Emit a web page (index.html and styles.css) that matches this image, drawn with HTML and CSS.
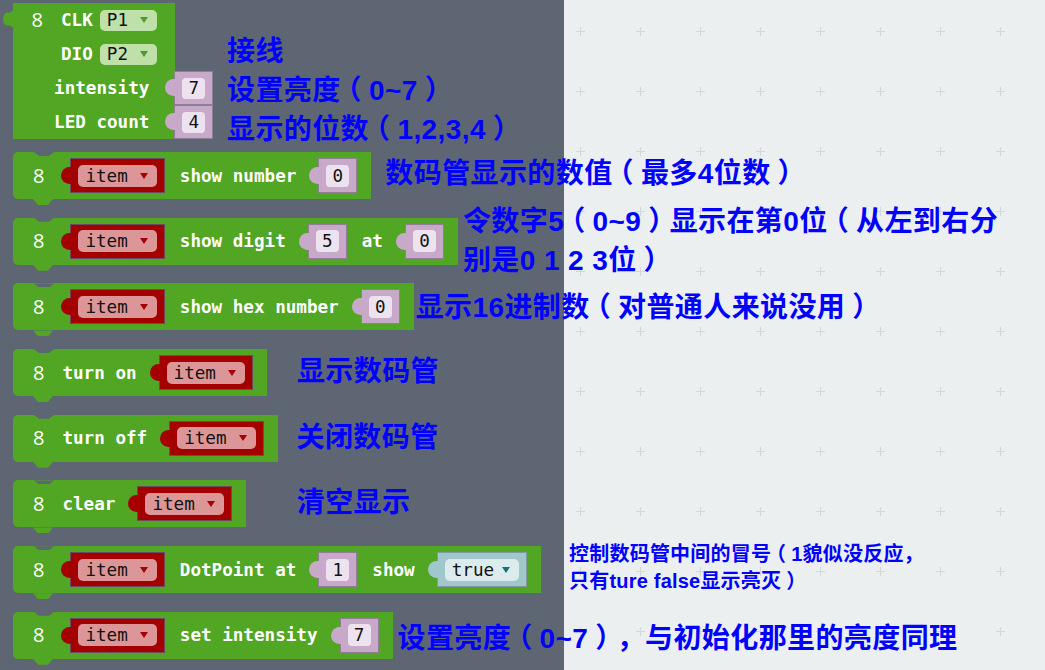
FILE: index.html
```html
<!DOCTYPE html>
<html lang="zh-CN">
<head>
<meta charset="utf-8">
<title>TM1637 blocks</title>
<link rel="stylesheet" href="styles.css">
</head>
<body>
<div class="ws">

  <div class="row row-init">
    <div class="b1">
      <svg class="otab" viewBox="0 0 10 18"><path d="M10 0 C9 2 7 2.5 5 2.5 C2 2.5 0 5 0 9 C0 13 2 15.5 5 15.5 C7 15.5 9 16 10 18 Z"/></svg>
      <div class="b1-line b1-first"><span class="num">8</span><span class="lbl">CLK</span><span class="dd dd-green">P1<i class="arr"></i></span></div>
      <div class="b1-line"><span class="lbl">DIO</span><span class="dd dd-green">P2<i class="arr"></i></span></div>
      <div class="b1-line b1-val"><span class="lbl">intensity</span><span class="slot s-purple s-tall"><span class="fld">7</span></span></div>
      <div class="b1-line b1-val"><span class="lbl">LED count</span><span class="slot s-purple s-tall"><span class="fld">4</span></span></div>
    </div>
    <div class="note note-init">接线<br>设置亮度<span class="pn">（</span>0~7<span class="pn">）</span><br>显示的位数<span class="pn">（</span>1,2,3,4<span class="pn">）</span></div>
  </div>

  <div class="row">
    <div class="blk"><span class="num">8</span><span class="slot s-red"><span class="dd dd-red">item<i class="arr"></i></span></span><span class="lbl">show number</span><span class="slot s-purple"><span class="fld">0</span></span></div>
    <div class="note n2">数码管显示的数值<span class="pn">（</span>最多4位数<span class="pn">）</span></div>
  </div>

  <div class="row">
    <div class="blk"><span class="num">8</span><span class="slot s-red"><span class="dd dd-red">item<i class="arr"></i></span></span><span class="lbl">show digit</span><span class="slot s-purple"><span class="fld">5</span></span><span class="lbl">at</span><span class="slot s-purple"><span class="fld">0</span></span></div>
    <div class="note n3">令数字5<span class="pn">（</span>0~9<span class="pn">）</span>显示在第0位<span class="pn">（</span>从左到右分<br>别是0 1 2 3位<span class="pn">）</span></div>
  </div>

  <div class="row">
    <div class="blk"><span class="num">8</span><span class="slot s-red"><span class="dd dd-red">item<i class="arr"></i></span></span><span class="lbl">show hex number</span><span class="slot s-purple"><span class="fld">0</span></span></div>
    <div class="note n4">显示16进制数<span class="pn">（</span>对普通人来说没用<span class="pn">）</span></div>
  </div>

  <div class="row">
    <div class="blk"><span class="num">8</span><span class="lbl">turn on</span><span class="slot s-red"><span class="dd dd-red">item<i class="arr"></i></span></span></div>
    <div class="note n5">显示数码管</div>
  </div>

  <div class="row">
    <div class="blk"><span class="num">8</span><span class="lbl">turn off</span><span class="slot s-red"><span class="dd dd-red">item<i class="arr"></i></span></span></div>
    <div class="note n6">关闭数码管</div>
  </div>

  <div class="row">
    <div class="blk"><span class="num">8</span><span class="lbl">clear</span><span class="slot s-red"><span class="dd dd-red">item<i class="arr"></i></span></span></div>
    <div class="note n7">清空显示</div>
  </div>

  <div class="row">
    <div class="blk"><span class="num">8</span><span class="slot s-red"><span class="dd dd-red">item<i class="arr"></i></span></span><span class="lbl">DotPoint at</span><span class="slot s-purple"><span class="fld">1</span></span><span class="lbl">show</span><span class="slot s-teal"><span class="dd dd-teal">true<i class="arr"></i></span></span></div>
    <div class="note note-small n8">控制数码管中间的冒号<span class="pn">（</span>1貌似没反应，<br>只有ture false显示亮灭<span class="pn">）</span></div>
  </div>

  <div class="row">
    <div class="blk"><span class="num">8</span><span class="slot s-red"><span class="dd dd-red">item<i class="arr"></i></span></span><span class="lbl">set intensity</span><span class="slot s-purple"><span class="fld">7</span></span></div>
    <div class="note n9">设置亮度<span class="pn">（</span>0~7<span class="pn">）</span>，与初始化那里的亮度同理</div>
  </div>

</div>
</body>
</html>
```

FILE: styles.css
```css
* { box-sizing: border-box; margin: 0; padding: 0; }
html, body { width: 1045px; height: 670px; overflow: hidden; }
body { font-family: "DejaVu Sans Mono", monospace; }

.ws {
  width: 1045px;
  height: 670px;
  padding: 3px 0 0 13px;
  display: flex;
  flex-direction: column;
  background:
    linear-gradient(to right, #5f6673 0, #5f6673 564px, transparent 564px) no-repeat,
    url("data:image/svg+xml,%3Csvg xmlns='http://www.w3.org/2000/svg' width='60' height='60'%3E%3Cpath d='M26 30.5h9M30.5 26v9' stroke='%23d2d7da' stroke-width='1'/%3E%3C/svg%3E") 10px 1px / 60px 60px repeat,
    #ebeff0;
}

.row { display: flex; align-items: center; height: 47px; flex: none; }
.row + .row { margin-top: 18.7px; }
.row-init { height: 136px; align-items: flex-start; margin-bottom: -5.7px; }

/* ---- first (create) block ---- */
.b1 {
  position: relative;
  width: 162px;
  background: #51a624;
  display: flex;
  flex-direction: column;
  flex: none;
}
.otab { position: absolute; left: -10px; top: 7px; width: 10px; height: 18px; fill: #51a624; }
.b1-line {
  height: 34px;
  display: flex;
  align-items: center;
  justify-content: flex-end;
  padding-right: 18px;
}
.b1-first .num { margin-left: 20px; margin-right: auto; }
.b1 .dd { margin-left: 7px; }
.b1-val { padding-right: 0; }
.b1-val .slot { margin-left: 25px; margin-right: -38px; }

/* ---- statement blocks ---- */
.blk {
  position: relative;
  display: flex;
  align-items: center;
  height: 47px;
  padding: 0 14px 0 20px;
  background: #51a624;
  border-radius: 5px 0 0 5px;
  flex: none;
}
.blk::before {
  content: "";
  position: absolute;
  top: 0;
  left: 21px;
  width: 20px;
  height: 4px;
  background: #5f6673;
  clip-path: polygon(0 0, 100% 0, 75% 100%, 25% 100%);
}
.blk::after {
  content: "";
  position: absolute;
  top: 100%;
  left: 20px;
  width: 20px;
  height: 6px;
  background: #51a624;
  clip-path: polygon(0 0, 100% 0, 75% 100%, 25% 100%);
}

.num {
  font-family: "Open Sans", "Noto Sans", sans-serif;
  font-size: 20px;
  color: #fff;
  line-height: 1;
}
.lbl {
  font-weight: bold;
  font-size: 17.6px;
  color: #fff;
  white-space: pre;
  margin-left: 15px;
}
.num + .lbl { margin-left: 18px; }

/* ---- input slots ---- */
.slot {
  position: relative;
  display: flex;
  align-items: center;
  height: 35px;
  padding: 0 7px;
  border: 1px solid;
  margin-left: 22px;
  flex: none;
}
.num + .slot { margin-left: 26px; }
.slot::before {
  content: "";
  position: absolute;
  left: -10px;
  top: 8px;
  width: 10px;
  height: 17px;
  border-radius: 9px 0 0 9px;
  background-color: inherit;
}
.s-tall { height: 34px; }
.s-tall::before { top: 7px; }

.s-red { background-color: #a40000; border-color: #6e4a60; }
.s-purple { background-color: #c9a9ca; border-color: #8f7e96; }
.s-teal { background-color: #a0c7cc; border-color: #7f9aa1; }

.fld {
  display: flex;
  align-items: center;
  justify-content: center;
  height: 22px;
  min-width: 23px;
  padding: 0 6px;
  border-radius: 4px;
  background: #ede3ee;
  font-size: 17.6px;
  color: #111;
}
.s-tall .fld { height: 21px; min-width: 22px; }

.dd {
  display: flex;
  align-items: center;
  height: 22px;
  padding: 0 9px 0 7px;
  border-radius: 5px;
  font-size: 17.6px;
  color: #111;
}
.arr {
  display: block;
  width: 0;
  height: 0;
  margin-left: 12px;
  border-left: 4px solid transparent;
  border-right: 4px solid transparent;
  border-top: 6px solid #a40000;
}
.dd-red { background: #dc9697; }
.dd-green { background: #bfe0a9; height: 21px; }
.dd-green .arr { border-top-color: #4f9a2a; }
.dd-teal { background: #dcebec; }
.dd-teal .arr { border-top-color: #1b6f76; margin-left: 8px; }

/* ---- notes ---- */
.note {
  font-family: "Liberation Sans", "Noto Sans CJK SC", sans-serif;
  font-weight: bold;
  font-size: 28px;
  line-height: 36px;
  letter-spacing: 0.4px;
  text-spacing-trim: space-all;
  color: #0000ff;
  white-space: nowrap;
  flex: none;
}
/* full-width brackets drawn half-width and centred in a full em */
.pn { font-family: "Noto Sans CJK SC", sans-serif; font-feature-settings: "halt" 1; margin: 0 0.25em; }

.note-init { margin-left: 52px; margin-top: 30.5px; }
.n2 { margin-left: 14px; margin-bottom: 6px; }
.n3 { margin-left: 5px; margin-bottom: 2px; }
.n4 { margin-left: 2px; }
.n5 { margin-left: 30px; margin-bottom: 1px; }
.n6 { margin-left: 19px; }
.n7 { margin-left: 51px; margin-bottom: 1px; }
.note-small { font-size: 20px; line-height: 26px; letter-spacing: 0.2px; }
.n8 { margin-left: 28px; margin-bottom: 5px; }
.n9 { margin-left: 5px; margin-top: 4px; }
```
